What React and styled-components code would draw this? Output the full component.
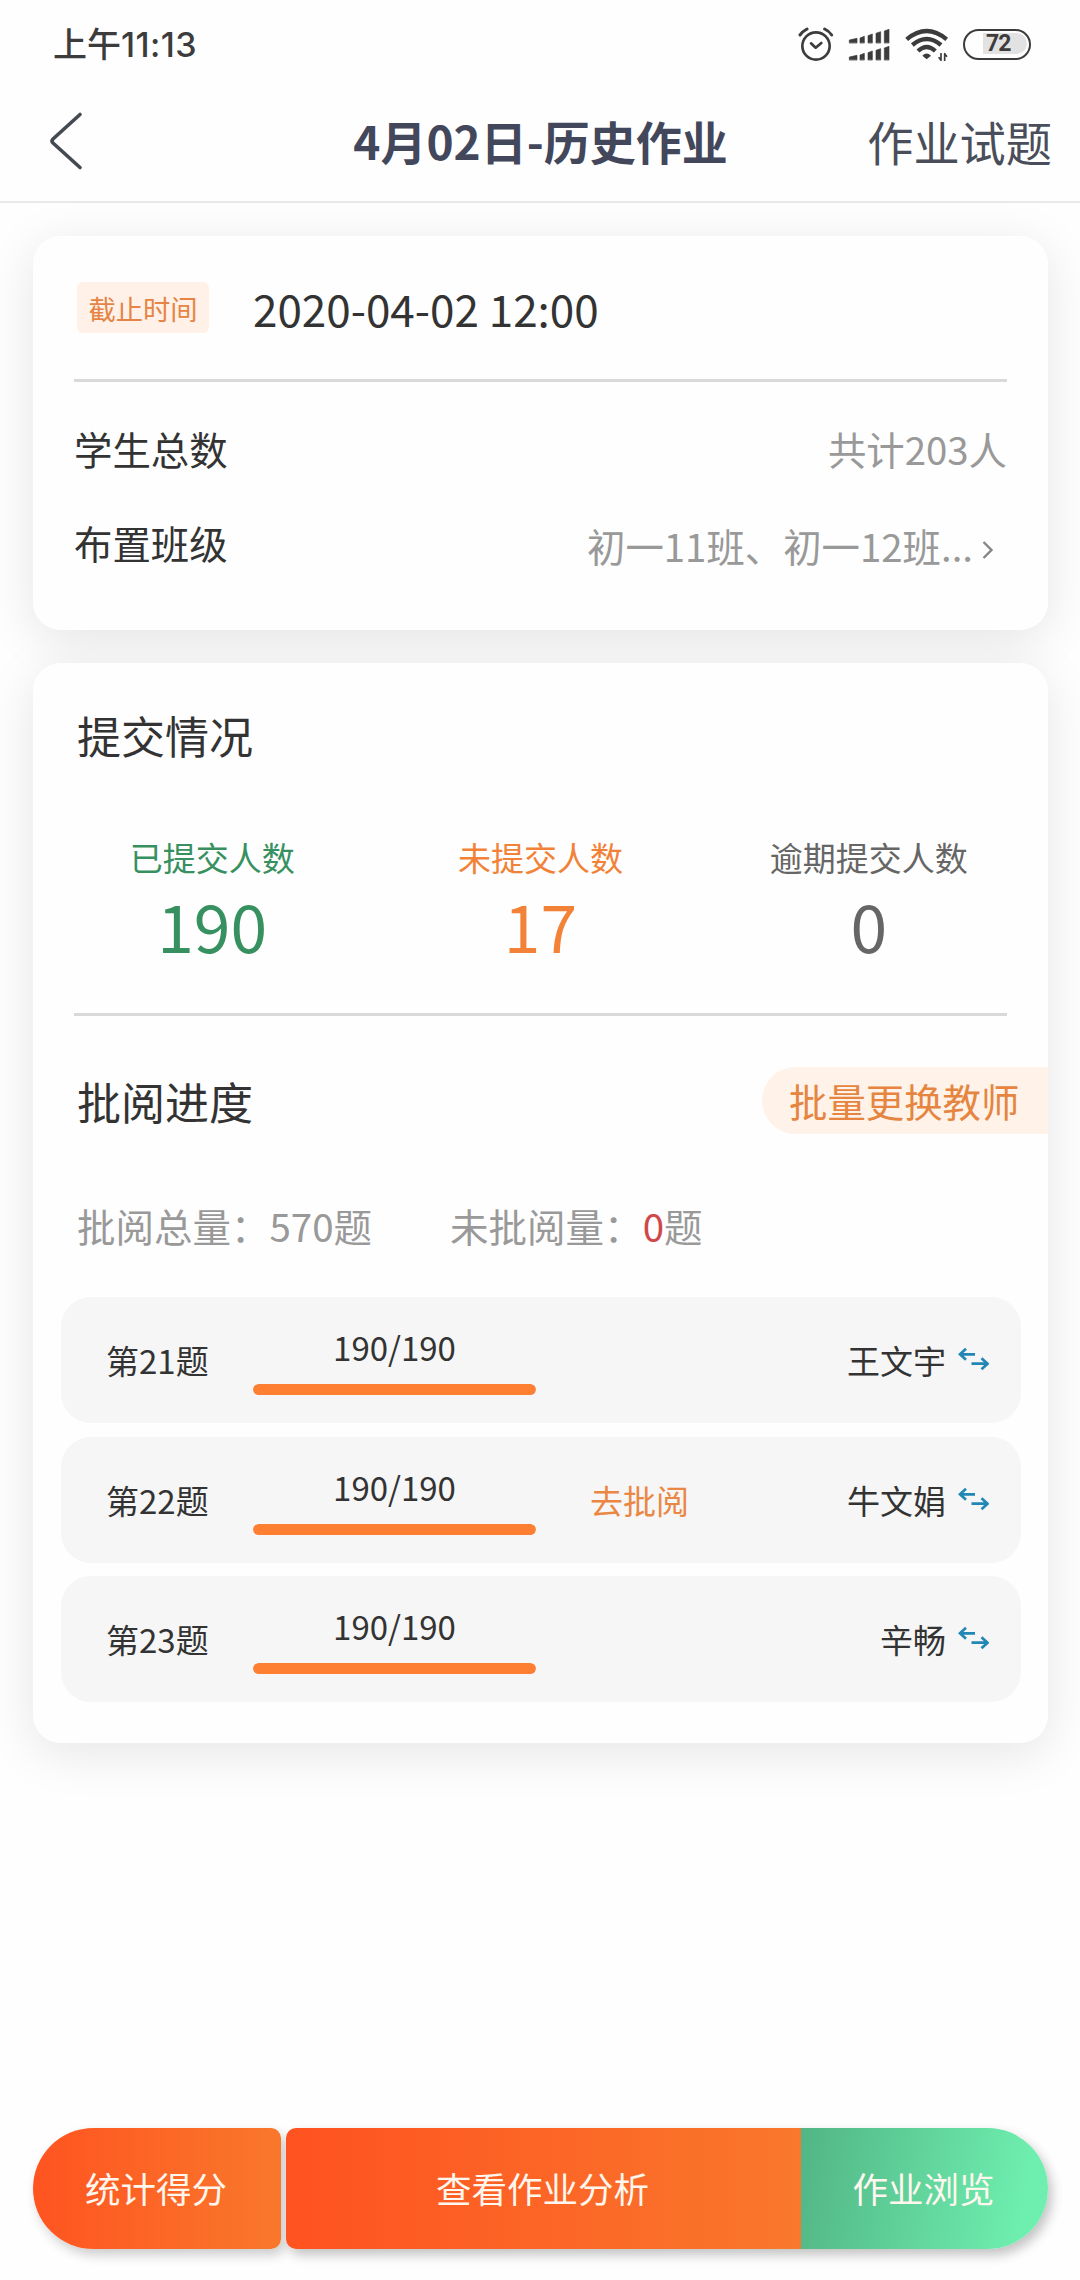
import React from "react";
import styled, { createGlobalStyle } from "styled-components";

const questions = [
  { id: 21, done: 190, total: 190, teacher: "王文宇" },
  { id: 22, done: 190, total: 190, teacher: "牛文娟", canMark: true },
  { id: 23, done: 190, total: 190, teacher: "辛畅" },
];

const stats = [
  { label: "已提交人数", value: 190, color: "#37905f" },
  { label: "未提交人数", value: 17, color: "#f18237" },
  { label: "逾期提交人数", value: 0, color: "#666666" },
];

const AlarmIcon = () => (
  <Icon $w={36} viewBox="24 0 108 180">
    <circle cx="78" cy="93" r="41" strokeWidth="8" />
    <path d="M30 60Q38 49 51 42M104 42Q117 48 125 60" strokeWidth="9" />
    <path d="M63 85L77 98L94 84" strokeWidth="8" />
  </Icon>
);

const bars = [
  [178, 23, 13],
  [210, 13, 19],
  [234, 13, 26],
  [258, 14, 33],
  [283, 14, 40],
];

const SignalIcon = () => (
  <Icon $w={42} viewBox="174 0 126 180">
    {[83, 134].map((base) =>
      bars.map(([x, w, h]) => (
        <path
          key={`${base}-${x}`}
          d={`M${x} ${base}V${base - h + 5}L${x + w} ${base - h}V${base}Z`}
          fill="#3c3c3c"
          strokeWidth="2"
        />
      ))
    )}
  </Icon>
);

const WifiIcon = () => (
  <Icon $w={44} viewBox="343 0 132 180">
    <g strokeWidth="13" strokeLinecap="butt">
      <path d="M348 73Q408 23 468 73" />
      <path d="M365 90Q408 54 451 90" />
      <path d="M382 108Q408 84 434 108" />
    </g>
    <path d="M395 122Q408 109 421 122L408 133Z" fill="#3c3c3c" stroke="none" />
    <path
      d="M451 114V136L444 127M462 138V116L469 125"
      strokeWidth="5"
      strokeLinecap="butt"
    />
  </Icon>
);

const BackIcon = () => (
  <svg width="36" height="62" viewBox="0 0 36 62" fill="none">
    <path
      d="M33 4.5L6 29Q4 31 6 33L33 57.5"
      stroke="#444a52"
      strokeWidth="3.6"
      strokeLinecap="round"
    />
  </svg>
);

const MoreIcon = () => (
  <svg width="12" height="20" viewBox="0 0 12 20" fill="none">
    <path d="M1.5 2L9.5 10L1.5 18" stroke="#858585" strokeWidth="2.4" />
  </svg>
);

const SwapIcon = () => (
  <svg width="31" height="24" viewBox="0 0 31 24" fill="none">
    <path
      d="M8 1.8L2 7.3L8 12.8M2 7.3H17M23.5 11.2L29.5 16.7L23.5 22.2M29.5 16.7H13.5"
      stroke="#2287b5"
      strokeWidth="2.7"
    />
  </svg>
);

const App = () => {
  return (
    <>
      <GlobalStyle />
      <Page>
        <StatusBar>
          <Clock>
            上午<ClockDigits>11:13</ClockDigits>
          </Clock>
          <StatusIcons>
            <AlarmIcon />
            <SignalIcon />
            <WifiIcon />
            <Battery>
              <BatteryLevel>72</BatteryLevel>
            </Battery>
          </StatusIcons>
        </StatusBar>
        <NavBar>
          <BackButton>
            <BackIcon />
          </BackButton>
          <NavTitle>4月02日-历史作业</NavTitle>
          <NavLink>作业试题</NavLink>
        </NavBar>

        <Content>
          <Card>
            <DeadlineRow>
              <Badge>截止时间</Badge>
              <Deadline>2020-04-02 12:00</Deadline>
            </DeadlineRow>
            <Divider />
            <InfoList>
              <InfoRow>
                <span>学生总数</span>
                <InfoValue>共计203人</InfoValue>
              </InfoRow>
              <InfoRow>
                <span>布置班级</span>
                <InfoValue $link>
                  初一11班、初一12班...
                  <MoreIcon />
                </InfoValue>
              </InfoRow>
            </InfoList>
          </Card>

          <Card>
            <SectionTitle $top="40px">提交情况</SectionTitle>
            <Stats>
              {stats.map((item) => (
                <Stat key={item.label} $color={item.color}>
                  <StatLabel>{item.label}</StatLabel>
                  <StatValue>{item.value}</StatValue>
                </Stat>
              ))}
            </Stats>
            <Divider />
            <ProgressHeader>
              <SectionTitle>批阅进度</SectionTitle>
              <ReplaceButton>批量更换教师</ReplaceButton>
            </ProgressHeader>
            <Totals>
              <span>批阅总量：570题</span>
              <span>
                未批阅量：<Warn>0</Warn>题
              </span>
            </Totals>
            <QuestionList>
              {questions.map((q) => (
                <QuestionRow key={q.id}>
                  <QuestionName>第{q.id}题</QuestionName>
                  <Progress>
                    <ProgressText>
                      {q.done}/{q.total}
                    </ProgressText>
                    <Track>
                      <Bar style={{ width: `${(q.done / q.total) * 100}%` }} />
                    </Track>
                  </Progress>
                  {q.canMark && <MarkLink>去批阅</MarkLink>}
                  <Teacher>
                    {q.teacher}
                    <SwapIcon />
                  </Teacher>
                </QuestionRow>
              ))}
            </QuestionList>
          </Card>
        </Content>

        <Footer>
          <ScoreButton>统计得分</ScoreButton>
          <ButtonGroup>
            <AnalysisButton>查看作业分析</AnalysisButton>
            <BrowseButton>作业浏览</BrowseButton>
          </ButtonGroup>
        </Footer>
      </Page>
    </>
  );
};

const GlobalStyle = createGlobalStyle`
  * {
    box-sizing: border-box;
  }

  body {
    margin: 0;
    background: #fefefe;
    color: #333333;
    font-family: "Noto Sans CJK SC", sans-serif;
  }

  button {
    border: 0;
    padding: 0;
    background: none;
    color: inherit;
    font-family: inherit;
  }

  svg {
    display: block;
    flex-shrink: 0;
  }
`;

const Page = styled.div`
  width: 1080px;
  height: 2280px;
  display: flex;
  flex-direction: column;
  overflow: hidden;
`;

const StatusBar = styled.div`
  height: 90px;
  padding: 0 49px 0 53px;
  display: flex;
  align-items: center;
  justify-content: space-between;
`;

const Clock = styled.div`
  color: #3c3c3c;
  font-size: 34px;
  font-weight: 500;
  line-height: 50px;
  padding-bottom: 2px;
`;

const ClockDigits = styled.span`
  font-family: Inter, sans-serif;
  font-size: 34px;
  letter-spacing: 0.4px;
`;

const StatusIcons = styled.div`
  display: flex;
  align-items: center;
  gap: 14.3px;
`;

const Icon = styled.svg`
  width: ${({ $w }) => $w}px;
  height: 60px;
  fill: none;
  stroke: #3c3c3c;
  stroke-linecap: round;
  stroke-linejoin: round;
`;

const Battery = styled.div`
  width: 68px;
  height: 31px;
  margin-bottom: 2px;
  padding: 2.5px 2.5px 2.5px 18px;
  border: 2.5px solid #3c3c3c;
  border-radius: 16px;
`;

const BatteryLevel = styled.div`
  height: 21px;
  padding-left: 3px;
  border-radius: 0 11px 11px 0;
  background: #e2e2e2;
  color: #3c3c3c;
  font: 700 23px/22px Roboto, sans-serif;
  letter-spacing: -1px;
`;

const NavBar = styled.header`
  height: 113px;
  padding: 0 28px 10px 47px;
  border-bottom: 2px solid #e9e9e9;
  display: grid;
  grid-template-columns: 1fr auto 1fr;
  align-items: center;
`;

const BackButton = styled.button`
  justify-self: start;
`;

const NavTitle = styled.h1`
  margin: 0 0 0 -18px;
  padding-bottom: 2px;
  color: #42475b;
  font-size: 46px;
  font-weight: 700;
  line-height: 68px;
`;

const NavLink = styled.a`
  justify-self: end;
  padding-top: 1px;
  color: #4a4e5a;
  font-size: 46.2px;
  line-height: 68px;
`;

const Content = styled.main`
  padding: 33px 32px 0 33px;
  display: flex;
  flex-direction: column;
  gap: 33px;
  isolation: isolate;
`;

/* the shadow sits under every card, so neighbours never darken each other */
const Card = styled.section`
  position: relative;
  border-radius: 28px;
  background: #fefefe;

  &::before {
    content: "";
    position: absolute;
    inset: 0;
    z-index: -1;
    border-radius: inherit;
    box-shadow: 0 10px 50px rgba(0, 0, 0, 0.1);
  }
`;

const DeadlineRow = styled.div`
  height: 143px;
  padding-left: 44px;
  display: flex;
  align-items: center;
  gap: 44px;
`;

const Badge = styled.span`
  width: 132px;
  height: 51px;
  border-radius: 6px;
  background: #fff1e8;
  color: #e58444;
  font-size: 27.3px;
  line-height: 52px;
  text-align: center;
`;

const Deadline = styled.span`
  font-size: 44px;
  line-height: 64px;
`;

const Divider = styled.div`
  height: 3px;
  margin: 0 41px;
  background: #d9d9d9;
`;

const InfoList = styled.div`
  padding: 19px 41px 41px 41px;
`;

const InfoRow = styled.div`
  height: 94px;
  display: flex;
  align-items: center;
  justify-content: space-between;
  font-size: 38.4px;
  line-height: 56px;
`;

const InfoValue = styled.span`
  display: flex;
  align-items: center;
  gap: 9px;
  padding: ${({ $link }) => ($link ? "6px 13px 0 0" : "0")};
  color: #999999;

  svg {
    margin-top: 9px;
  }
`;

const SectionTitle = styled.h2`
  margin: 0;
  padding: ${({ $top }) => $top || 0} 0 0 44px;
  font-size: 44px;
  font-weight: 400;
  line-height: 64px;
`;

const Stats = styled.div`
  padding: 67px 15px 45px;
  display: grid;
  grid-template-columns: repeat(3, 1fr);
`;

const Stat = styled.div`
  color: ${({ $color }) => $color};
  text-align: center;
`;

const StatLabel = styled.div`
  font-size: 33px;
  line-height: 46px;
`;

const StatValue = styled.div`
  padding-top: 1px;
  font-size: 66px;
  line-height: 87px;
`;

const ProgressHeader = styled.div`
  height: 67px;
  margin-top: 51px;
  display: flex;
  align-items: center;
  justify-content: space-between;
`;

const ReplaceButton = styled.button`
  width: 286px;
  height: 67px;
  padding-left: 27px;
  border-radius: 34px 0 0 34px;
  background: #fff2e9;
  color: #e58540;
  font-size: 38.4px;
  line-height: 67px;
  text-align: left;
`;

const Totals = styled.div`
  padding: 63px 0 44px 44px;
  display: flex;
  gap: 78px;
  color: #999999;
  font-size: 38.5px;
  line-height: 56px;
`;

const Warn = styled.span`
  color: #d0484a;
`;

const QuestionList = styled.div`
  padding: 0 27px 41px 28px;
  display: flex;
  flex-direction: column;
  gap: 13.5px;
`;

const QuestionRow = styled.div`
  height: 126px;
  padding: 0 32px 0 45px;
  border-radius: 30px;
  background: #f6f6f6;
  display: flex;
  align-items: center;
  font-size: 33px;
  line-height: 48px;
`;

const QuestionName = styled.div`
  width: 147px;
`;

const Progress = styled.div`
  width: 283px;
  align-self: flex-start;
  padding-top: 26px;
`;

const ProgressText = styled.div`
  font-size: 33px;
  text-align: center;
`;

const Track = styled.div`
  height: 11px;
  margin-top: 13px;
  border-radius: 6px;
  background: #e6e6e6;
  overflow: hidden;
`;

const Bar = styled.div`
  height: 100%;
  border-radius: 6px;
  background: #ff7f32;
`;

const MarkLink = styled.a`
  margin-left: 54px;
  color: #ea8744;
`;

const Teacher = styled.div`
  margin-left: auto;
  display: flex;
  align-items: center;
  gap: 12px;

  svg {
    margin-bottom: 2px;
  }
`;

const Footer = styled.footer`
  height: 121px;
  margin: auto 32px 31px 33px;
  display: flex;
  gap: 5px;
`;

const FooterButton = styled.button`
  padding: 0 2px 2px 0;
  color: #fff6ee;
  font-size: 35.5px;
  line-height: 52px;
`;

const ScoreButton = styled(FooterButton)`
  width: 248px;
  border-radius: 61px 10px 10px 61px;
  background: linear-gradient(90deg, #ff5420, #f9782c);
  box-shadow: 4px 6px 12px rgba(0, 0, 0, 0.2);
`;

const ButtonGroup = styled.div`
  flex: 1;
  display: flex;
  border-radius: 10px 61px 61px 10px;
  box-shadow: 4px 6px 12px rgba(0, 0, 0, 0.24);
  overflow: hidden;
`;

const AnalysisButton = styled(FooterButton)`
  flex: 1;
  background: linear-gradient(90deg, #ff5220, #f9782c);
`;

const BrowseButton = styled(FooterButton)`
  width: 247px;
  background: linear-gradient(100deg, #52b585, #6eeeaf 88%);
`;

export default App;
